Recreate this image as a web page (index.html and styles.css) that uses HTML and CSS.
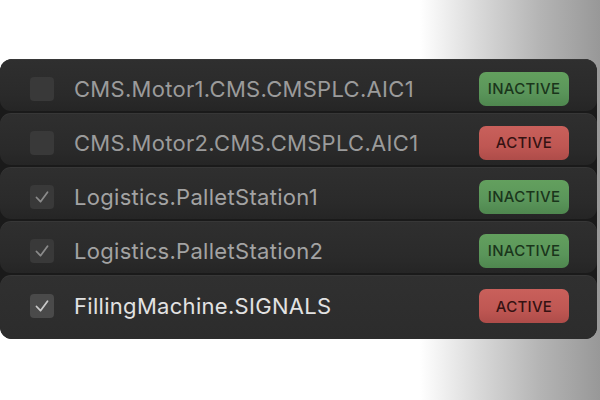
FILE: index.html
```html
<!DOCTYPE html>
<html>
<head>
<meta charset="utf-8">
<link rel="stylesheet" href="styles.css">
</head>
<body>
<div class="page">
  <div class="list">
    <div class="row">
      <span class="check"></span>
      <span class="name">CMS.Motor1.CMS.CMSPLC.AIC1</span>
      <span class="badge inactive">INACTIVE</span>
    </div>
    <div class="row">
      <span class="check"></span>
      <span class="name">CMS.Motor2.CMS.CMSPLC.AIC1</span>
      <span class="badge active">ACTIVE</span>
    </div>
    <div class="row">
      <span class="check"><svg viewBox="0 0 24 24" width="24" height="24"><path d="M6.5 12.5l4 4.2 7-9.5" fill="none" stroke="#8a8a8a" stroke-width="1.8" stroke-linecap="round" stroke-linejoin="round"/></svg></span>
      <span class="name mid">Logistics.PalletStation1</span>
      <span class="badge inactive">INACTIVE</span>
    </div>
    <div class="row">
      <span class="check"><svg viewBox="0 0 24 24" width="24" height="24"><path d="M6.5 12.5l4 4.2 7-9.5" fill="none" stroke="#8a8a8a" stroke-width="1.8" stroke-linecap="round" stroke-linejoin="round"/></svg></span>
      <span class="name mid">Logistics.PalletStation2</span>
      <span class="badge inactive">INACTIVE</span>
    </div>
    <div class="row last">
      <span class="check on"><svg viewBox="0 0 24 24" width="24" height="24"><path d="M6.5 12.5l4 4.2 7-9.5" fill="none" stroke="#c8c8c8" stroke-width="1.8" stroke-linecap="round" stroke-linejoin="round"/></svg></span>
      <span class="name bright">FillingMachine.SIGNALS</span>
      <span class="badge active">ACTIVE</span>
    </div>
  </div>
</div>
</body>
</html>
```
FILE: styles.css
```css
* { box-sizing: border-box; }
html, body { margin: 0; padding: 0; }
body {
  width: 600px;
  height: 400px;
  overflow: hidden;
  font-family: Inter, "Noto Sans", sans-serif;
  background: linear-gradient(90deg, #ffffff 0%, #ffffff 70%, #d8d8d8 80%, #b4b4b4 90%, #989898 100%);
}
.page {
  padding-top: 59px;
  padding-right: 3px;
}
.list {
  background: #1a1a1a;
  border-radius: 12px;
  display: flex;
  flex-direction: column;
  gap: 2px;
  overflow: hidden;
}
.row {
  height: 52px;
  display: flex;
  align-items: center;
  padding: 7px 28px 0 30px;
  border-radius: 11px;
  background: linear-gradient(180deg, #2f2f2f 0%, #2a2a2a 70%, #252525 100%);
  box-shadow: inset 0 1px 0 rgba(255,255,255,0.04);
}
.row.last {
  height: 64px;
  padding-top: 0;
  padding-bottom: 2px;
  background: linear-gradient(180deg, #303030 0%, #2c2c2c 100%);
}
.check {
  width: 24px;
  height: 24px;
  border-radius: 4px;
  background: #393939;
  flex: none;
  display: flex;
}
.check.on { background: #4a4a4a; }
.name {
  margin-left: 20px;
  font-size: 22px;
  letter-spacing: 0.3px;
  color: #9b9b9b;
  flex: 1;
  white-space: nowrap;
}
.name.mid { color: #a3a3a3; }
.name.bright { color: #e2e2e2; }
.badge {
  width: 90px;
  height: 34px;
  border-radius: 7px;
  display: flex;
  align-items: center;
  justify-content: center;
  font-size: 15px;
  font-weight: 500;
  letter-spacing: 0.3px;
  flex: none;
}
.badge.inactive {
  background: linear-gradient(180deg, #63a05e 0%, #5a955a 60%, #4f874f 100%);
  color: #1a351b;
}
.badge.active {
  background: linear-gradient(180deg, #c9605b 0%, #bf5753 60%, #ae4c49 100%);
  color: #351212;
}
```
